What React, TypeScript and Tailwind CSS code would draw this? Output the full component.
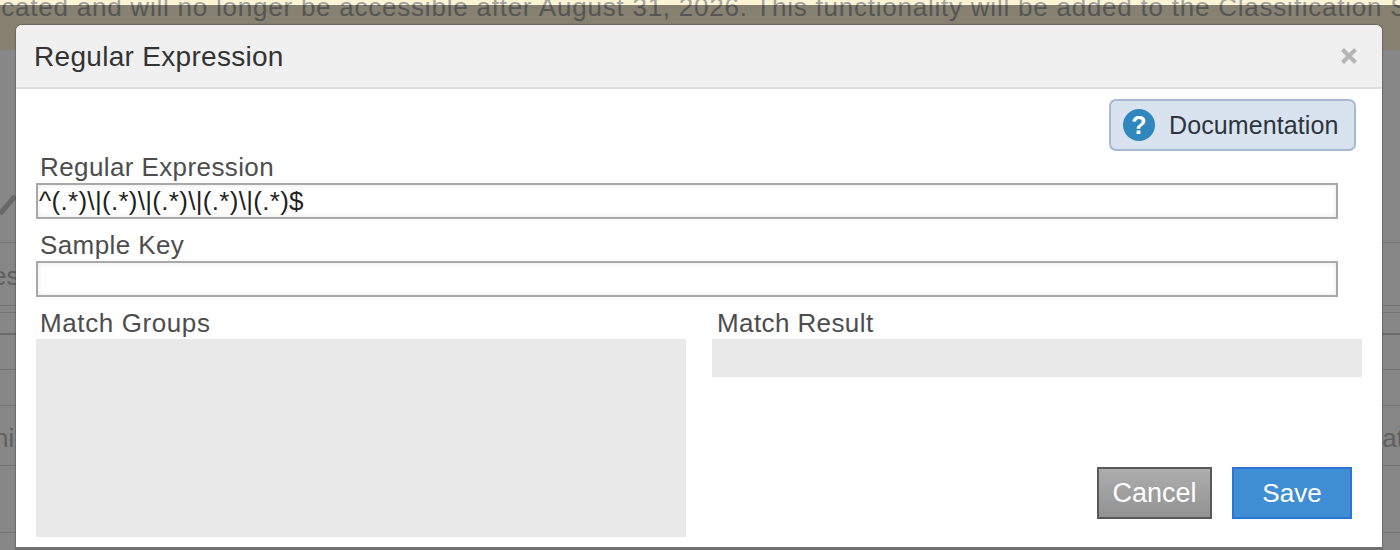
import React from 'react';

const sans = "font-['Liberation_Sans',Arial,sans-serif]";

export default function App() {
  return (
    <div className={`relative h-[550px] w-[1400px] overflow-hidden bg-white ${sans}`}>
      {/* page behind the dialog */}
      <div className="h-[50px] overflow-hidden whitespace-nowrap bg-[#fdf4d3] pl-[2px] text-[26px] leading-[26px] tracking-[0.77px] text-[#a3a3a3]">
        <div className="mt-[-6px] ml-[-16px]">
          ocated and will no longer be accessible after August 31, 2026. This functionality will be added to the Classification Service
        </div>
      </div>
      <div className="flex h-[500px] flex-col text-[26px] text-[#b5b5b5]">
        <div className="flex h-[193px] items-end border-b border-[#ddd] pb-[27px]">
          <svg width="16" height="20" viewBox="0 0 16 20">
            <path d="M0 19 15 1" stroke="#c4c4c4" strokeWidth="5" fill="none" />
          </svg>
        </div>
        <div className="flex h-[63px] items-center justify-between border-b border-[#ddd] pt-[4px]">
          <span className="ml-[-8px]">es</span>
        </div>
        <div className="h-[7px] border-b border-[#ddd]" />
        <div className="h-[22px] border-b-2 border-[#ccc]" />
        <div className="h-[35px] border-b border-[#ddd]" />
        <div className="h-[36px] border-b border-[#ddd]" />
        <div className="flex h-[60px] items-center justify-between border-b border-[#ddd] pt-[5px]">
          <span className="ml-[-6px]">ni</span>
          <span className="mr-[-4px]">at</span>
        </div>
        <div className="h-[67px] border-b border-[#ddd]" />
      </div>

      {/* backdrop */}
      <div className="absolute inset-x-0 top-[5px] bottom-0 bg-black/[.47]" />

      {/* dialog */}
      <div className="absolute top-[25px] left-[16px] flex h-[524px] w-[1366px] flex-col rounded-t-[6px] border-b-2 border-[#707070] bg-white shadow-[0_0_1px_1px_rgba(60,60,60,0.35)]">
        <div className="flex h-[64px] items-center justify-between rounded-t-[6px] border-b-2 border-[#dddddd] bg-[#f0f0f0] pr-[24px] pl-[18px]">
          <h1 className="pt-[1px] text-[28px] leading-[32px] tracking-[0.3px] text-[#333]">Regular Expression</h1>
          <svg width="18" height="18" viewBox="0 0 18 18">
            <path d="M2.5 2.5 15.5 15.5M15.5 2.5 2.5 15.5" stroke="#b5b5b5" strokeWidth="4.2" />
          </svg>
        </div>

        <div className="flex flex-1 flex-col px-[20px] pb-[10px]">
          <div className="mt-[10px] mr-[6px] flex justify-end">
            <button className="flex h-[52px] w-[247px] items-center gap-[14px] rounded-[7px] border-2 border-[#a7b9d2] bg-[#d9e3ef] pl-[12px] text-[25px] tracking-[0.1px] text-[#2d3440]">
              <span className="flex h-[32px] w-[32px] items-center justify-center rounded-full bg-[#2f87bd] text-[25px] leading-none font-bold text-white">?</span>
              <span className="pt-[1px]">Documentation</span>
            </button>
          </div>

          <label className="block pl-[4px] text-[26px] leading-[32px] tracking-[0.4px] text-[#4d4d4d]">Regular Expression</label>
          <input
            defaultValue="^(.*)\|(.*)\|(.*)\|(.*)\|(.*)$"
            className="h-[36px] w-[1302px] border-2 border-[#a8a8a8] bg-white pl-[1px] text-[26px] tracking-[0.3px] text-[#222] shadow-[inset_0_0_5px_rgba(0,0,0,0.1)] outline-none"
          />

          <label className="mt-[10px] block pl-[4px] text-[26px] leading-[32px] tracking-[0.4px] text-[#4d4d4d]">Sample Key</label>
          <input className="h-[36px] w-[1302px] border-2 border-[#a8a8a8] bg-white shadow-[inset_0_0_5px_rgba(0,0,0,0.1)] outline-none" />

          <div className="mt-[10px] grid flex-1 grid-cols-[650px_650px] gap-x-[26px]">
            <div className="flex flex-col">
              <label className="pl-[4px] text-[26px] leading-[32px] tracking-[0.6px] text-[#4d4d4d]">Match Groups</label>
              <div className="flex-1 bg-[#e9e9e9]" />
            </div>
            <div className="flex flex-col">
              <label className="pl-[5px] text-[26px] leading-[32px] tracking-[0.4px] text-[#4d4d4d]">Match Result</label>
              <div className="h-[38px] bg-[#e9e9e9]" />
              <div className="mt-auto mr-[10px] mb-[18px] flex justify-end gap-[20px]">
                <button className="h-[52px] w-[115px] border-2 border-[#595959] bg-gradient-to-b from-[#adadad] to-[#929292] text-[27px] text-white">Cancel</button>
                <button className="h-[52px] w-[120px] border-2 border-[#2c74d4] bg-[#3f8dd2] text-[26px] text-white">Save</button>
              </div>
            </div>
          </div>
        </div>
      </div>
    </div>
  );
}
